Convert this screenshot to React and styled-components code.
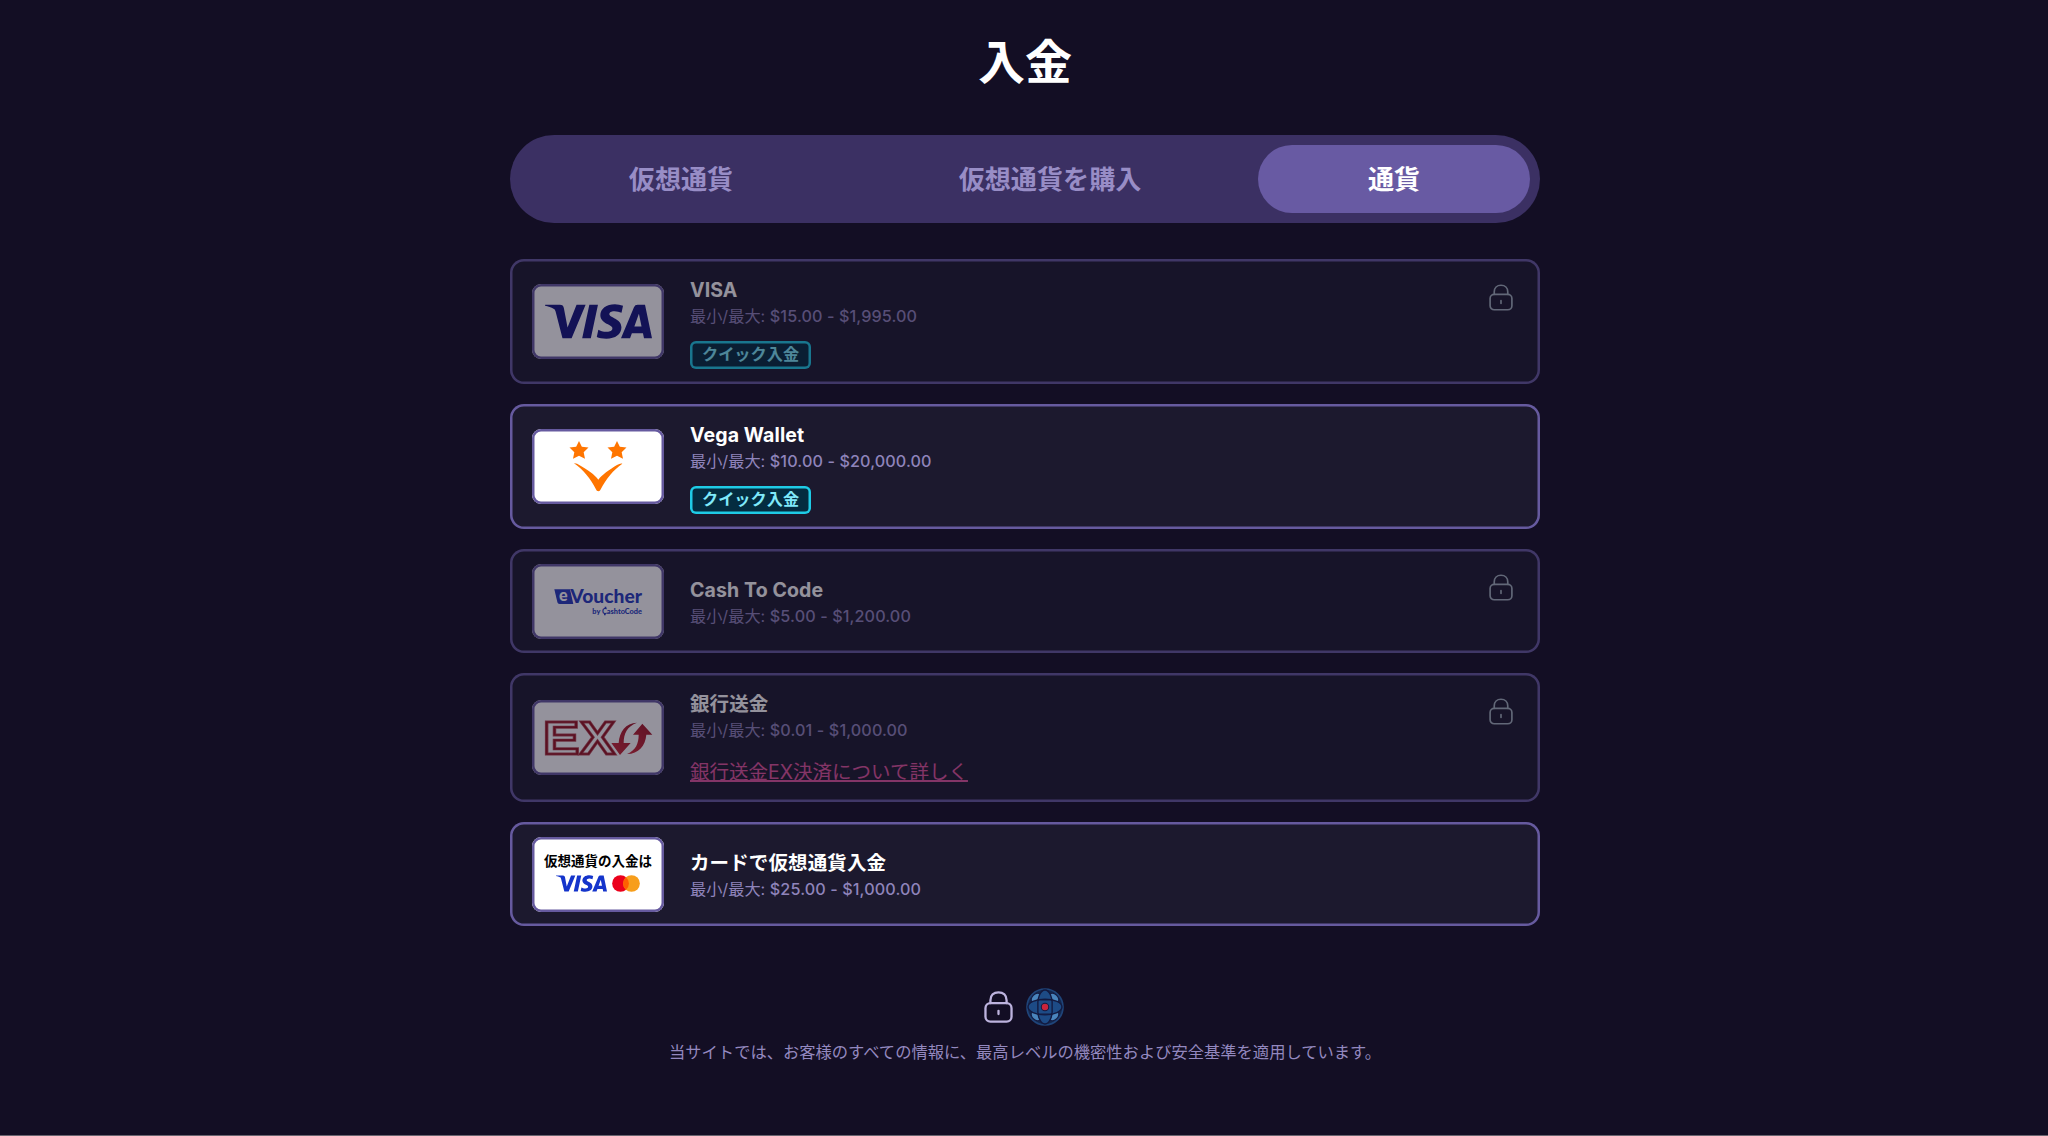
import React from 'react';
import styled, { createGlobalStyle, css } from 'styled-components';
import { SiVisa } from 'react-icons/si';

const GlobalStyle = createGlobalStyle`
  * {
    box-sizing: border-box;
  }

  body {
    margin: 0;
    background: #130e24;
    font-family: Inter, 'Noto Sans CJK JP', sans-serif;
  }
`;

const Page = styled.main`
  display: flex;
  flex-direction: column;
  align-items: center;
  height: 1136px;
  padding: 27px 0 0 2px;
  border-bottom: 1px solid #68646f;
`;

const Title = styled.h1`
  margin: 0 0 38px;
  color: #fff;
  font-size: 47px;
  font-weight: 700;
  line-height: 69px;
  padding-bottom: 1px;
`;

const Tabs = styled.nav`
  display: flex;
  width: 1030px;
  height: 88px;
  margin-bottom: 36px;
  padding: 10px;
  border-radius: 44px;
  background: #3b3063;
`;

const Tab = styled.button`
  flex: 0 0 ${props => props.$width}px;
  padding: 0 0 3px;
  border: 0;
  border-radius: 34px;
  background: ${props => (props.$active ? '#685aa3' : 'transparent')};
  color: ${props => (props.$active ? '#fff' : '#988dc6')};
  font-family: inherit;
  font-size: 26.1px;
  font-weight: 700;
`;

const List = styled.div`
  display: flex;
  flex-direction: column;
  gap: 20px;
  width: 1030px;
`;

const Card = styled.section`
  display: flex;
  align-items: center;
  height: ${props => props.$height}px;
  padding: 0 27px 0 22px;
  border-radius: 14px;
  background: #1c192e;
  box-shadow: inset 0 0 0 2.5px #665a9f;

  ${props =>
    props.$locked &&
    css`
      opacity: 0.55;
    `}
`;

const Logo = styled.div`
  display: flex;
  flex: none;
  align-items: center;
  justify-content: center;
  width: 132px;
  height: 75px;
  border-radius: 9px;
  background: #fff;
  box-shadow: inset 0 0 0 2.5px #665a9f;

  > svg {
    display: block;
  }
`;

const CardLogo = styled(Logo)`
  flex-direction: column;
`;

const CardLogoText = styled.div`
  color: #000;
  font-size: 13.5px;
  font-weight: 700;
  line-height: 18px;
`;

const CardBrands = styled.div`
  display: flex;
  align-items: center;
  gap: 5px;
  height: 27px;
`;

const VisaMark = styled(SiVisa)`
  width: ${props => props.$width}px;
  height: ${props => props.$width}px;
  color: ${props => props.$color};
`;

const Info = styled.div`
  display: flex;
  flex: 1;
  flex-direction: column;
  align-items: flex-start;
  margin-left: 26px;
  padding-top: 2px;
`;

const Name = styled.div`
  color: #fff;
  font-size: 19.5px;
  font-weight: 700;
  letter-spacing: 0.12px;
  line-height: 28px;
`;

const Limits = styled.div`
  color: #8f84bb;
  font-size: 16.2px;
  line-height: 25px;
`;

const Amount = styled.span`
  font-weight: 500;
  letter-spacing: 0.1px;
`;

const Tag = styled.div`
  height: 28px;
  margin-top: 12px;
  padding: 0 12px;
  border-radius: 6px;
  background: #042c40;
  box-shadow: inset 0 0 0 2.5px #1fcbe6;
  color: #7fe9fa;
  font-size: 16.2px;
  font-weight: 700;
  line-height: 26px;
`;

const MoreLink = styled.a`
  margin-top: 14px;
  color: #e0559f;
  font-size: 19.5px;
  line-height: 30px;
  text-decoration: underline;
  text-decoration-thickness: 2px;
`;

const CardLock = styled.div`
  align-self: flex-start;
  height: 27px;
  margin-top: 25px;
  color: #a3b3bd;
`;

const Footer = styled.footer`
  display: flex;
  flex-direction: column;
  align-items: center;
  margin-top: 62px;
`;

const FooterIcons = styled.div`
  display: flex;
  align-items: center;
  gap: 13px;
  height: 38px;
  margin-right: 2px;
  color: #bdb3de;
`;

const FooterText = styled.p`
  margin: 14px 0 0;
  color: #9388bf;
  font-size: 16.3px;
  line-height: 24px;
`;

const LockIcon = ({ width, height, stroke }) => (
  <svg
    width={width}
    height={height}
    viewBox="0 0 87 97"
    fill="none"
    stroke="currentColor"
    strokeWidth={stroke}
    strokeLinecap="round"
  >
    <rect x="4" y="37" width="79" height="56" rx="15" />
    <path d="M19 37V28C19 13 29 4 43.500 4S68 13 68 28v9" />
    <path d="M43.500 60v10" />
  </svg>
);

const Vega = () => (
  <svg width="127" height="71" viewBox="104 110 381 213" fill="#ff7500">
    <path
      id="star"
      d="M236 140l8.500 17 20 2.500-14.500 14 4 20-18-9.500-18 9.500 4-20-14.500-14 20-2.500z"
    />
    <use href="#star" x="114" />
    <path d="M221 207c5-1 11 2 17 6 24 14 45 28 56 43 11-15 32-29 56-44 6-3 12-6 16-4-27 18-49 47-64 75-4 10-12 10-16 0-15-28-37-58-65-76z" />
  </svg>
);

const Voucher = () => (
  <svg width="127" height="71" viewBox="104 77 381 213" fill="#263cc0">
    <path d="M162 147h47l10 44h-41c-4 0-6-2-7-6z" />
    <text
      x="176"
      y="181"
      fill="#fff"
      fontFamily="Lato"
      fontSize="48"
      fontWeight="900"
    >
      e
    </text>
    <text
      x="210"
      y="189"
      fontFamily="Lato"
      fontSize="59"
      fontWeight="900"
      textLength="215"
      lengthAdjust="spacingAndGlyphs"
    >
      Voucher
    </text>
    <text
      x="276"
      y="220"
      fontFamily="Lato"
      fontSize="22"
      fontWeight="900"
      textLength="149"
      lengthAdjust="spacingAndGlyphs"
    >
      by CashtoCode
    </text>
    <path d="M313 199h5v7h-5zM311 220h5v5h-5z" />
  </svg>
);

const exText = {
  fontFamily: 'Liberation Sans',
  fontSize: 140,
  fontWeight: 700,
  lengthAdjust: 'spacingAndGlyphs',
  fill: 'none',
};

const BankEx = () => (
  <svg width="127" height="71" viewBox="104 112 381 213">
    <defs>
      <linearGradient id="exRed" x1="0" y1="1" x2="1" y2="0">
        <stop offset="0" stopColor="#cf2a3a" />
        <stop offset="1" stopColor="#9c1526" />
      </linearGradient>
    </defs>
    {[
      ['#b85560', 9],
      ['#971220', 5],
    ].map(([stroke, width]) => (
      <g key={stroke} stroke={stroke} strokeWidth={width}>
        <text x="128" y="269" textLength="109" {...exText}>
          E
        </text>
        <text x="239" y="269" textLength="105" {...exText}>
          X
        </text>
      </g>
    ))}
    <g fill="url(#exRed)">
      <path d="M410 174c-34 0-53 28-55 61h-22l26 36 32-36h-21c0-28 10-50 40-61z" />
      <path d="M380 268c35 0 55-25 58-58h18l-30-33-28 33h17c0 26-8 46-35 58z" />
    </g>
  </svg>
);

const Mastercard = () => (
  <svg width="28" height="17" viewBox="0 0 84 51">
    <circle cx="25.500" cy="25.500" r="25" fill="#eb001b" />
    <circle cx="58.500" cy="25.500" r="25" fill="#f79e1b" />
    <path d="M42 6.500a25 25 0 0 1 0 38 25 25 0 0 1 0-38z" fill="#ff5f00" />
  </svg>
);

const Globe = () => (
  <svg width="38" height="38" viewBox="0 0 112 112" stroke="#131a40">
    <circle cx="56" cy="56" r="53" fill="#14284f" stroke="#1f4479" strokeWidth="5" />
    <g fill="#4a85bd" strokeWidth="3">
      <ellipse cx="30" cy="30" rx="17" ry="12" transform="rotate(-45 30 30)" />
      <ellipse cx="82" cy="30" rx="17" ry="12" transform="rotate(45 82 30)" />
      <ellipse cx="30" cy="82" rx="17" ry="12" transform="rotate(45 30 82)" />
      <ellipse cx="82" cy="82" rx="17" ry="12" transform="rotate(-45 82 82)" />
    </g>
    <g fill="#1d4b86" strokeWidth="4">
      <ellipse cx="56" cy="56" rx="23" ry="50" />
      <ellipse cx="56" cy="56" rx="50" ry="23" />
      <rect x="35" y="35" width="42" height="42" rx="5" />
      <circle cx="56" cy="56" r="11" fill="#c9243c" strokeWidth="3" />
    </g>
  </svg>
);

const methods = [
  {
    name: 'VISA',
    limits: '$15.00 - $1,995.00',
    height: 125,
    locked: true,
    quick: true,
    logo: (
      <Logo>
        <VisaMark $width={107} $color="#141780" />
      </Logo>
    ),
  },
  {
    name: 'Vega Wallet',
    limits: '$10.00 - $20,000.00',
    height: 125,
    quick: true,
    logo: (
      <Logo>
        <Vega />
      </Logo>
    ),
  },
  {
    name: 'Cash To Code',
    limits: '$5.00 - $1,200.00',
    height: 104,
    locked: true,
    logo: (
      <Logo>
        <Voucher />
      </Logo>
    ),
  },
  {
    name: '銀行送金',
    limits: '$0.01 - $1,000.00',
    height: 129,
    locked: true,
    link: '銀行送金EX決済について詳しく',
    logo: (
      <Logo>
        <BankEx />
      </Logo>
    ),
  },
  {
    name: 'カードで仮想通貨入金',
    limits: '$25.00 - $1,000.00',
    height: 104,
    logo: (
      <CardLogo>
        <CardLogoText>仮想通貨の入金は</CardLogoText>
        <CardBrands>
          <VisaMark $width={51} $color="#1434cb" />
          <Mastercard />
        </CardBrands>
      </CardLogo>
    ),
  },
];

const App = () => {
  return (
    <Page lang="ja">
      <GlobalStyle />
      <Title>入金</Title>
      <Tabs>
        <Tab $width={322}>仮想通貨</Tab>
        <Tab $width={416}>仮想通貨を購入</Tab>
        <Tab $width={272} $active>
          通貨
        </Tab>
      </Tabs>
      <List>
        {methods.map(method => (
          <Card key={method.name} $height={method.height} $locked={method.locked}>
            {method.logo}
            <Info>
              <Name>{method.name}</Name>
              <Limits>
                最小/最大: <Amount>{method.limits}</Amount>
              </Limits>
              {method.quick && <Tag>クイック入金</Tag>}
              {method.link && <MoreLink>{method.link}</MoreLink>}
            </Info>
            {method.locked && (
              <CardLock>
                <LockIcon width={24} height={27} stroke={6} />
              </CardLock>
            )}
          </Card>
        ))}
      </List>
      <Footer>
        <FooterIcons>
          <LockIcon width={29} height={32} stroke={7} />
          <Globe />
        </FooterIcons>
        <FooterText>
          当サイトでは、お客様のすべての情報に、最高レベルの機密性および安全基準を適用しています。
        </FooterText>
      </Footer>
    </Page>
  );
};

export default App;
